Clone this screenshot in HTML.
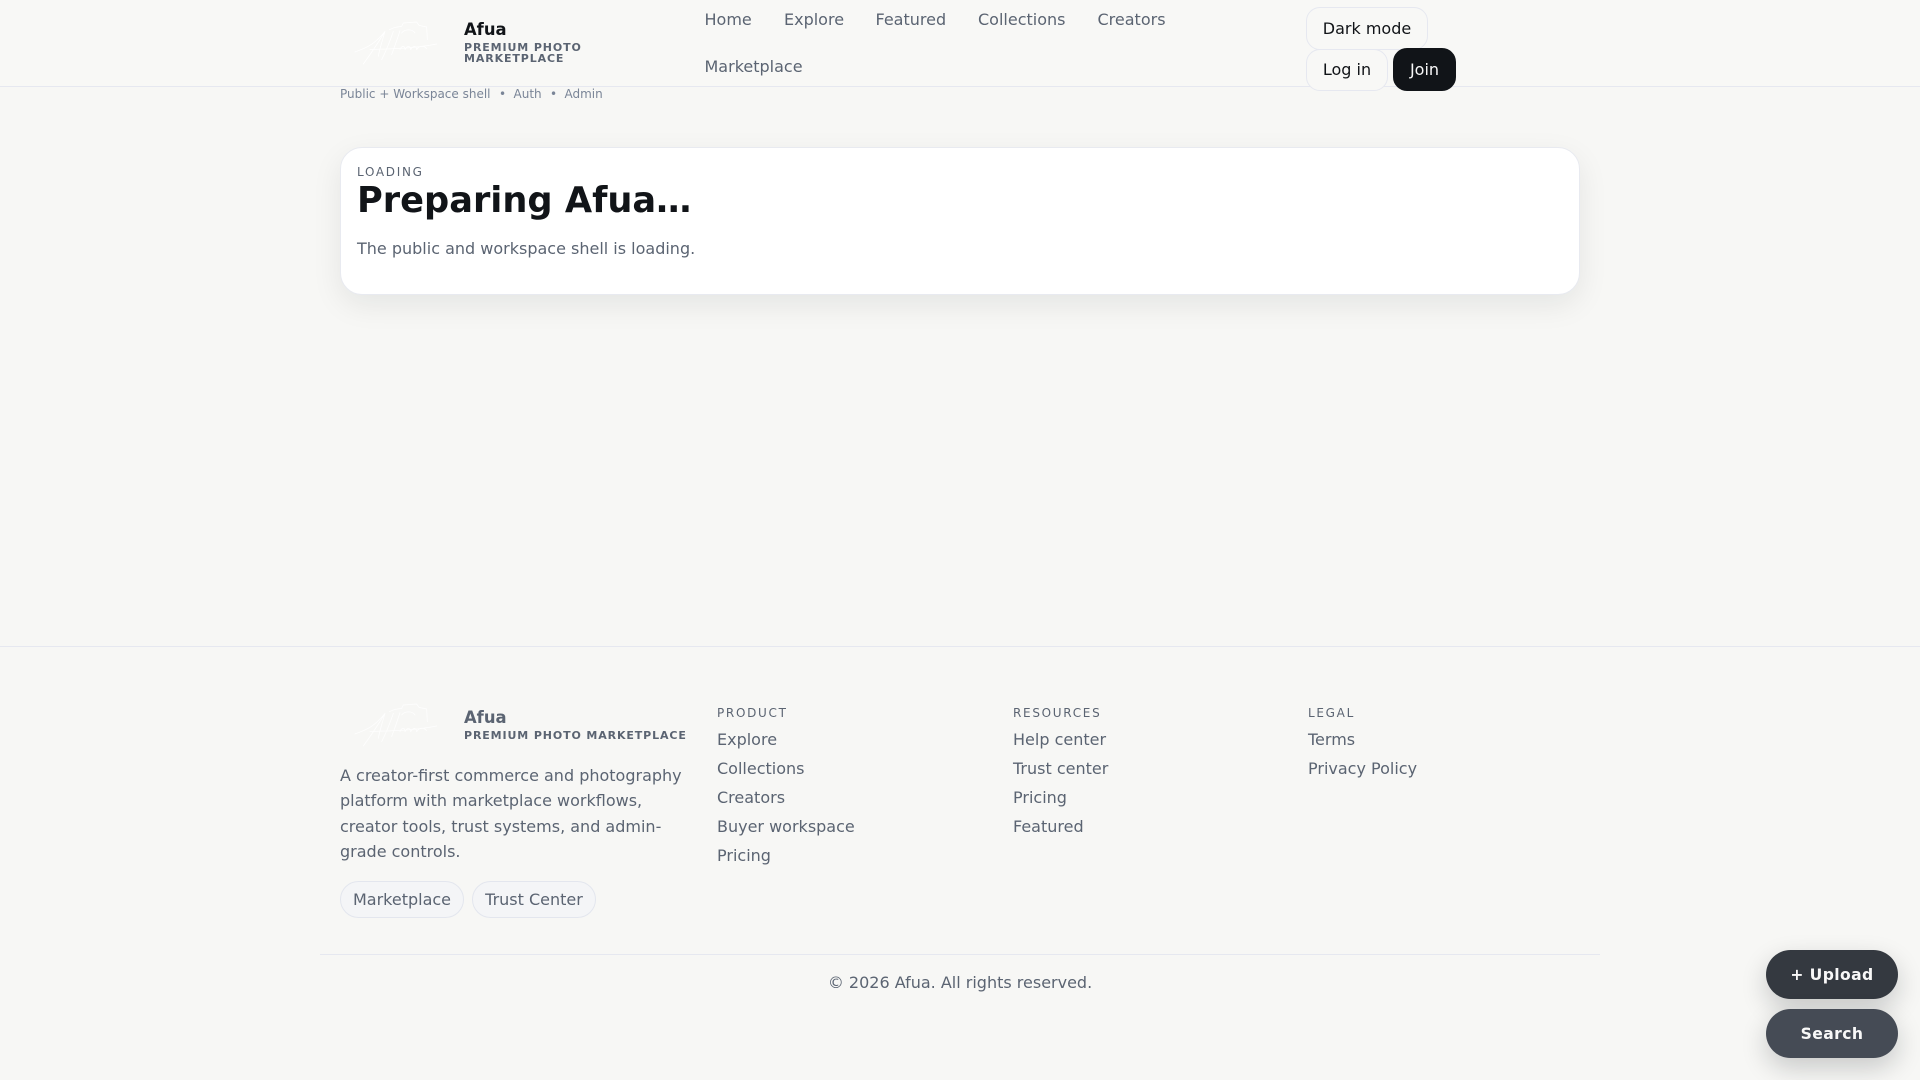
<!DOCTYPE html>
<html lang="en"><head><meta charset="utf-8"><title>Afua</title>
<style>
html,body{margin:0;padding:0}
body{width:1920px;height:1080px;overflow:hidden;position:relative;background:#f7f7f5;font-family:"DejaVu Sans","Liberation Sans",sans-serif;color:#5b6472}
.a{position:absolute;white-space:nowrap;line-height:20px}
.nav{font-size:16px;color:#5b6472}
.btn{position:absolute;box-sizing:border-box;border:1px solid #e6e8f0;border-radius:14px;display:flex;align-items:center;justify-content:center;font-size:16px;color:#111418;background:#f8f8f6}
.fl{font-size:16px}
.fh{font-size:12px;letter-spacing:1.7px;color:#5b6472}
.chip{position:absolute;box-sizing:border-box;height:37px;top:881px;border:1px solid #e3e6ee;border-radius:19px;background:#f4f5f7;display:flex;align-items:center;justify-content:center;font-size:16px;color:#5b6472}
.fab{position:absolute;left:1766px;width:132px;height:49px;border-radius:25px;display:flex;align-items:center;justify-content:center;color:#f8f8f8;font-weight:700;font-size:15.6px;letter-spacing:.4px;box-shadow:0 10px 26px rgba(17,20,24,.2)}
svg{position:absolute;fill:none;stroke:#fff;stroke-width:2.2;stroke-linecap:round;stroke-linejoin:round}
.bc{font-size:12px;color:#7a8597}
</style></head>
<body>
<div style="position:absolute;left:0;top:0;width:1920px;height:86px;background:#f8f8f6;border-bottom:1px solid #e6e8f0"></div>
<svg style="left:350px;top:18px" width="90" height="50" viewBox="0 0 270 150"><path d="M118 35L135 28L155 25L160 15L200 12L207 22L230 27L232 65M155 45C162 35 185 30 195 45M15 102C40 92 70 85 105 40C85 75 60 110 40 138M105 40C98 65 88 95 85 115M130 40C118 75 105 105 95 125M150 38C140 70 132 90 125 110M60 95C100 92 180 94 260 78M150 95C155 82 165 82 165 95C172 82 180 82 182 95C190 82 198 82 200 95C208 82 222 82 230 92"/></svg>
<div class="a" style="left:464px;top:20px;font-size:16.4px;font-weight:700;color:#111418">Afua</div>
<div class="a" style="left:464px;top:42px;font-size:11px;line-height:11px;font-weight:700;letter-spacing:.88px;color:#5b6472">PREMIUM PHOTO<br>MARKETPLACE</div>
<div class="a nav" style="left:704.5px;top:10px">Home</div>
<div class="a nav" style="left:784px;top:10px">Explore</div>
<div class="a nav" style="left:875.5px;top:10px">Featured</div>
<div class="a nav" style="left:978px;top:10px">Collections</div>
<div class="a nav" style="left:1097.5px;top:10px">Creators</div>
<div class="a nav" style="left:704.5px;top:57px">Marketplace</div>
<div class="btn" style="left:1306px;top:7px;width:122px;height:43px">Dark mode</div>
<div class="btn" style="left:1306px;top:49px;width:82px;height:42px;padding-bottom:1px">Log in</div>
<div class="btn" style="left:1393px;top:48px;width:63px;height:43px;background:#111418;border-color:#111418;color:#f8f8f8">Join</div>
<div class="a bc" style="left:340px;top:84px">Public + Workspace shell</div>
<div class="a bc" style="left:499px;top:84px">•</div>
<div class="a bc" style="left:513.5px;top:84px">Auth</div>
<div class="a bc" style="left:550px;top:84px">•</div>
<div class="a bc" style="left:564.5px;top:84px">Admin</div>

<div style="position:absolute;left:340px;top:147px;width:1240px;height:148px;box-sizing:border-box;background:#fff;border:1px solid #e8eaf0;border-radius:22px;box-shadow:0 10px 30px rgba(17,20,24,.08)"></div>
<div class="a" style="left:357px;top:162px;font-size:12px;letter-spacing:1.7px;color:#5b6472">LOADING</div>
<div class="a" style="left:357px;top:179px;font-size:35.2px;line-height:44px;font-weight:700;color:#111418">Preparing Afua…</div>
<div class="a" style="left:357px;top:239px;font-size:16px;color:#5b6472">The public and workspace shell is loading.</div>

<div style="position:absolute;left:0;top:646px;width:1920px;height:1px;background:#e6e8f0"></div>
<svg style="left:350px;top:700px;opacity:.9" width="90" height="50" viewBox="0 0 270 150"><path d="M118 35L135 28L155 25L160 15L200 12L207 22L230 27L232 65M155 45C162 35 185 30 195 45M15 102C40 92 70 85 105 40C85 75 60 110 40 138M105 40C98 65 88 95 85 115M130 40C118 75 105 105 95 125M150 38C140 70 132 90 125 110M60 95C100 92 180 94 260 78M150 95C155 82 165 82 165 95C172 82 180 82 182 95C190 82 198 82 200 95C208 82 222 82 230 92"/></svg>
<div class="a" style="left:464px;top:708px;font-size:16.4px;font-weight:700;color:#5b6472">Afua</div>
<div class="a" style="left:464px;top:726px;font-size:11px;font-weight:700;letter-spacing:.88px;color:#5b6472">PREMIUM PHOTO MARKETPLACE</div>
<div class="a" style="left:340px;top:763px;font-size:16px;line-height:25.3px;color:#5b6472">A creator-first commerce and photography<br>platform with marketplace workflows,<br>creator tools, trust systems, and admin-<br>grade controls.</div>
<div class="chip" style="left:340px;width:124px">Marketplace</div>
<div class="chip" style="left:472px;width:124px">Trust Center</div>

<div class="a fh" style="left:717px;top:703px">PRODUCT</div>
<div class="a fl" style="left:717px;top:730px">Explore</div>
<div class="a fl" style="left:717px;top:759px">Collections</div>
<div class="a fl" style="left:717px;top:788px">Creators</div>
<div class="a fl" style="left:717px;top:817px">Buyer workspace</div>
<div class="a fl" style="left:717px;top:846px">Pricing</div>

<div class="a fh" style="left:1013px;top:703px">RESOURCES</div>
<div class="a fl" style="left:1013px;top:730px">Help center</div>
<div class="a fl" style="left:1013px;top:759px">Trust center</div>
<div class="a fl" style="left:1013px;top:788px">Pricing</div>
<div class="a fl" style="left:1013px;top:817px">Featured</div>

<div class="a fh" style="left:1308px;top:703px">LEGAL</div>
<div class="a fl" style="left:1308px;top:730px">Terms</div>
<div class="a fl" style="left:1308px;top:759px">Privacy Policy</div>

<div style="position:absolute;left:320px;top:954px;width:1280px;height:1px;background:#e6e8f0"></div>
<div class="a" style="left:0;width:1920px;text-align:center;top:973px;font-size:16px;color:#5b6472">© 2026 Afua. All rights reserved.</div>

<div class="fab" style="top:950px;background:#343940">+ Upload</div>
<div class="fab" style="top:1009px;background:#454b55">Search</div>
</body></html>
